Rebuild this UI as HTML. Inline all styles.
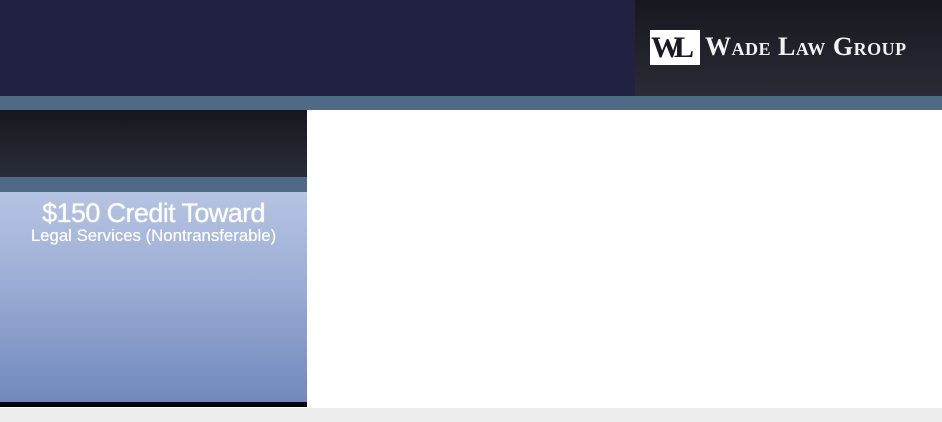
<!DOCTYPE html>
<html><head><style>
body{margin:0;width:942px;height:422px;position:relative;background:#fff;overflow:hidden;font-family:"Liberation Sans",sans-serif}
div{position:absolute}
</style></head><body>
<div style="left:0;top:0;width:942px;height:96px;background:#212242"></div>
<div style="left:635px;top:0;width:307px;height:96px;background:linear-gradient(#17181f,#22232c 60%,#2a2b36)"></div>
<div style="left:650px;top:30px;width:50px;height:35px;background:#fff"></div>
<div style="left:651px;top:30px;width:50px;height:35px;font-family:'Liberation Serif',serif;font-weight:bold;font-size:30px;color:#1a1a22;letter-spacing:-7px;line-height:36px">WL</div>
<div style="left:705px;top:32px;font-family:'Liberation Serif',serif;font-weight:bold;color:#f2f2f2;font-variant:small-caps;font-size:26px;letter-spacing:0.5px;line-height:30px;white-space:nowrap">Wade Law Group</div>
<div style="left:0;top:96px;width:942px;height:14px;background:#4f6a85"></div>
<div style="left:0;top:110px;width:307px;height:67px;background:linear-gradient(#16171c,#2b2c3b)"></div>
<div style="left:0;top:177px;width:307px;height:15px;background:#4f6a85"></div>
<div style="left:0;top:192px;width:307px;height:210px;background:linear-gradient(#b6c4e2,#9eafd6 40%,#7089bc)"></div>
<div style="left:0;top:198px;width:307px;text-align:center;color:#fff;font-size:27px;line-height:30px;letter-spacing:-0.6px;text-shadow:0 0 1px #fff">$150 Credit Toward</div>
<div style="left:0;top:226px;width:307px;text-align:center;color:#fff;font-size:16.8px;line-height:19px;text-shadow:0 0 0.5px #fff">Legal Services (Nontransferable)</div>
<div style="left:0;top:402px;width:307px;height:5px;background:#05050a"></div>
<div style="left:0;top:408px;width:942px;height:14px;background:#eeeded"></div>
</body></html>
